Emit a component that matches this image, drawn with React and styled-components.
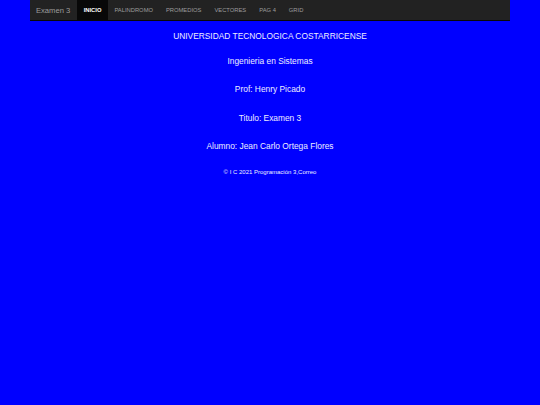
import React from "react";
import styled, { createGlobalStyle } from "styled-components";

const GlobalStyle = createGlobalStyle`
  html, body {
    margin: 0;
    padding: 0;
    background: #0000ff;
    font-family: "Liberation Sans", Arial, sans-serif;
  }
`;

const links = ["INICIO", "PALINDROMO", "PROMEDIOS", "VECTORES", "PAG 4", "GRID"];

const App = () => {
  return (
    <Page>
      <GlobalStyle />
      <Navbar>
        <Brand>Examen 3</Brand>
        <NavList>
          {links.map((l, i) => (
            <NavItem key={l} $active={i === 0}>
              {l}
            </NavItem>
          ))}
        </NavList>
      </Navbar>
      <Content>
        <Line $gap={15.4}>UNIVERSIDAD TECNOLOGICA COSTARRICENSE</Line>
        <Line $gap={18.3}>Ingenieria en Sistemas</Line>
        <Line $gap={18.5}>Prof: Henry Picado</Line>
        <Line $gap={18}>Titulo: Examen 3</Line>
        <Line $gap={18.5}>Alumno: Jean Carlo Ortega Flores</Line>
        <Footer>© I C 2021 Programación 3,Correo</Footer>
      </Content>
    </Page>
  );
};

export default App;

/******************/
/***** Styles *****/
/******************/

const Page = styled.div`
  width: 540px;
  min-height: 405px;
  background: #0000ff;
`;

const Navbar = styled.nav`
  display: flex;
  align-items: stretch;
  width: 480px;
  height: 21px;
  margin: 0 30px;
  background: #222222;
  border-bottom: 1px solid #080808;
  box-sizing: border-box;
`;

const Brand = styled.div`
  display: flex;
  align-items: center;
  padding: 0 7px 0 6px;
  font-size: 7.6px;
  color: #9d9d9d;
`;

const NavList = styled.div`
  display: flex;
  align-items: stretch;
`;

const NavItem = styled.div`
  display: flex;
  align-items: center;
  padding: 0 6.5px;
  font-size: 5.8px;
  color: ${({ $active }) => ($active ? "#ffffff" : "#9d9d9d")};
  background: ${({ $active }) => ($active ? "#080808" : "transparent")};
  font-weight: ${({ $active }) => ($active ? 700 : 400)};
`;

const Content = styled.div`
  display: flex;
  flex-direction: column;
  align-items: center;
  padding-top: 9.5px;
  color: #eeeeff;
`;

const Line = styled.div`
  font-size: 8.4px;
  line-height: 10px;
  margin-bottom: ${({ $gap }) => $gap}px;
`;

const Footer = styled.div`
  font-size: 6px;
  line-height: 7px;
`;
